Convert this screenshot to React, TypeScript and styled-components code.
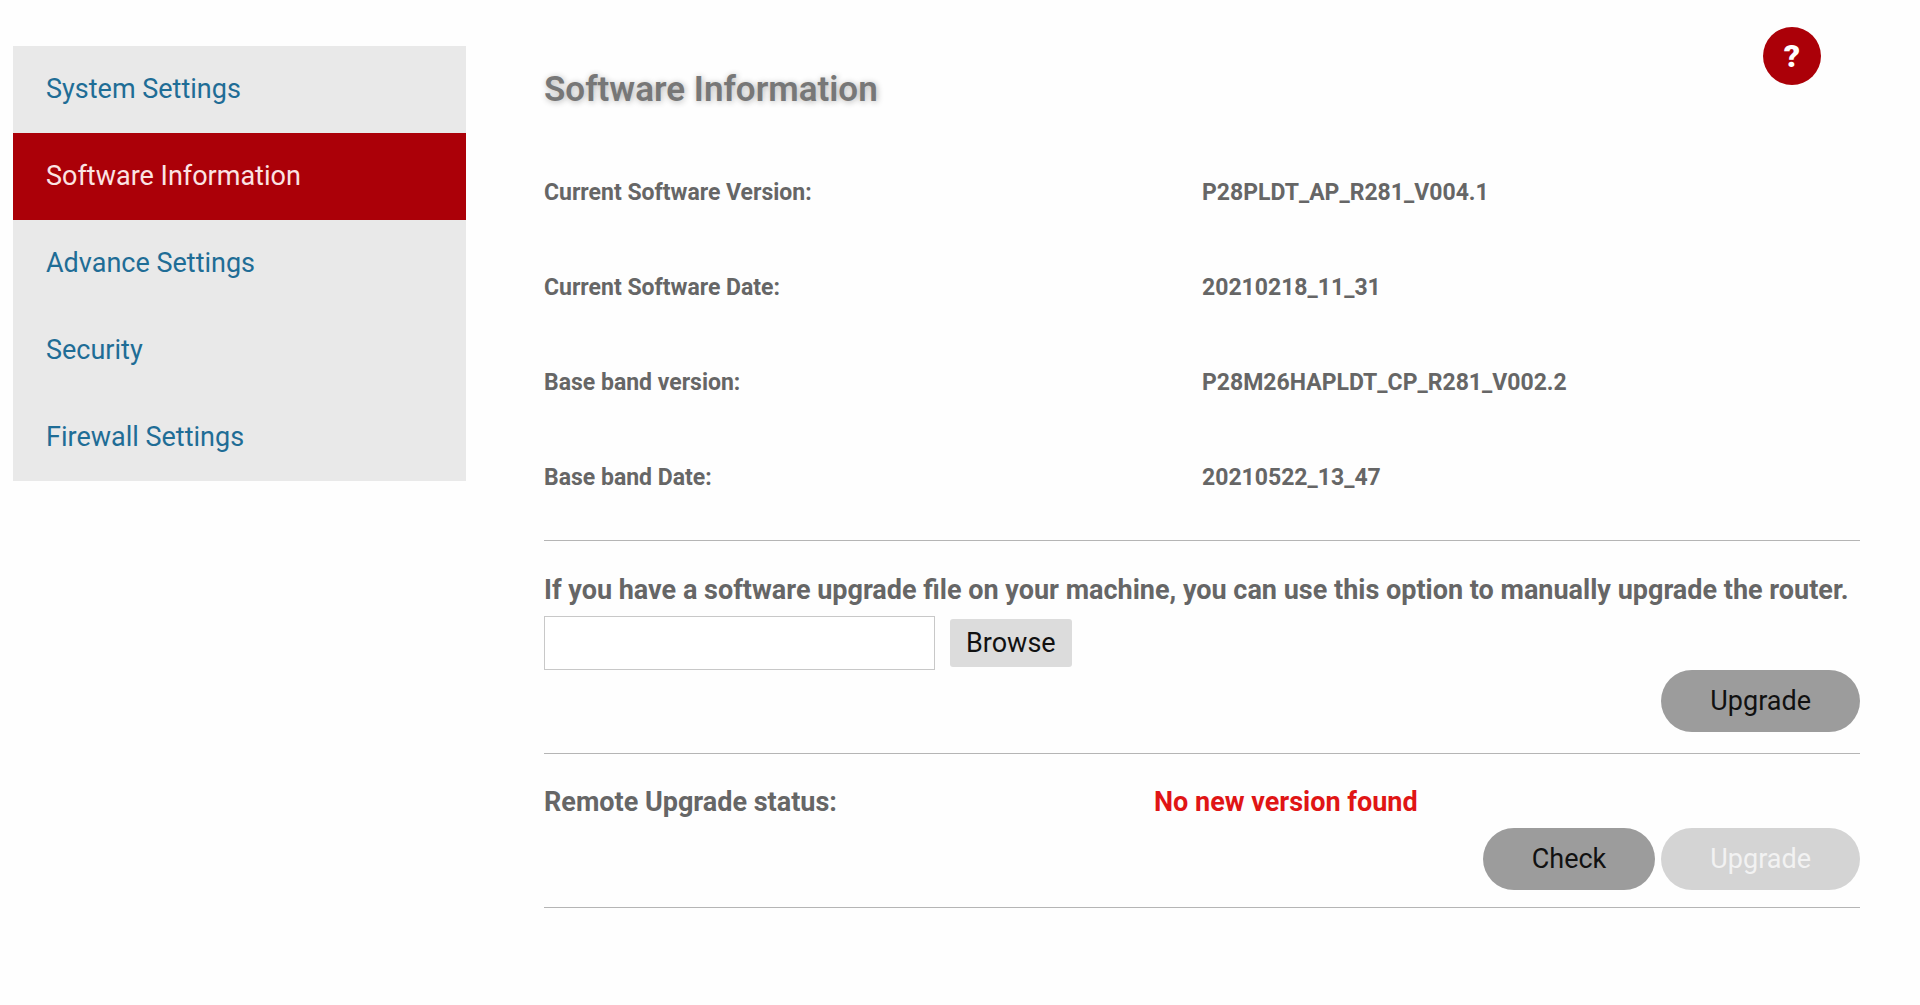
import { useRef, useState } from "react";
import styled, { createGlobalStyle } from "styled-components";

const menuItems = [
  "System Settings",
  "Software Information",
  "Advance Settings",
  "Security",
  "Firewall Settings",
];

const versionInfo = [
  { label: "Current Software Version:", value: "P28PLDT_AP_R281_V004.1" },
  { label: "Current Software Date:", value: "20210218_11_31" },
  { label: "Base band version:", value: "P28M26HAPLDT_CP_R281_V002.2" },
  { label: "Base band Date:", value: "20210522_13_47" },
];

function App() {
  const [current, setCurrent] = useState("Software Information");
  const [fileName, setFileName] = useState("");
  const fileRef = useRef<HTMLInputElement>(null);

  return (
    <>
      <GlobalStyle />
      <Wrapper>
        <Sidebar>
          {menuItems.map((item) => (
            <MenuLink
              key={item}
              href="#"
              $active={item === current}
              onClick={() => setCurrent(item)}
            >
              {item}
            </MenuLink>
          ))}
        </Sidebar>
        <Main>
          <Header>
            <Title>Software Information</Title>
            <HelpButton aria-label="Help">?</HelpButton>
          </Header>
          <InfoList>
            {versionInfo.map((e) => (
              <InfoRow key={e.label}>
                <dt>{e.label}</dt>
                <dd>{e.value}</dd>
              </InfoRow>
            ))}
          </InfoList>
          <Section>
            <FileLabel htmlFor="upgradeFile">
              If you have a software upgrade file on your machine, you can use
              this option to manually upgrade the router.
            </FileLabel>
            <FileRow>
              <FileInput id="upgradeFile" type="text" value={fileName} readOnly />
              <BrowseButton onClick={() => fileRef.current?.click()}>
                Browse
              </BrowseButton>
              <input
                ref={fileRef}
                type="file"
                hidden
                onChange={(e) => setFileName(e.target.files?.[0]?.name ?? "")}
              />
            </FileRow>
            <Actions>
              <PillButton>Upgrade</PillButton>
            </Actions>
          </Section>
          <Section $last>
            <StatusRow>
              <span>Remote Upgrade status:</span>
              <StatusText>No new version found</StatusText>
            </StatusRow>
            <Actions>
              <PillButton>Check</PillButton>
              <PillButton disabled>Upgrade</PillButton>
            </Actions>
          </Section>
        </Main>
      </Wrapper>
    </>
  );
}

export default App;

const GlobalStyle = createGlobalStyle`
  * {
    box-sizing: border-box;
  }

  body {
    margin: 0;
    background: #fefefe;
    color: #666;
    font-family: Roboto, "Liberation Sans", sans-serif;
    font-size: 27px;
    line-height: 32px;
  }

  button, input {
    font: inherit;
  }
`;

const Wrapper = styled.div`
  display: grid;
  grid-template-columns: minmax(0, 453fr) minmax(0, 1316fr);
  column-gap: 78px;
  align-items: start;
  padding: 27px 60px 0 13px;
`;

const Sidebar = styled.nav`
  display: flex;
  flex-direction: column;
  margin-top: 19px;
  background: #e9e9e9;
`;

const MenuLink = styled.a<{ $active: boolean }>`
  padding: 27px 33px;
  line-height: 33px;
  text-decoration: none;
  color: ${(props) => (props.$active ? "#fbe3e3" : "#1f6d96")};
  background: ${(props) => (props.$active ? "#ab0008" : "transparent")};
`;

const Main = styled.main`
  display: flex;
  flex-direction: column;
`;

const Header = styled.header`
  display: flex;
  justify-content: space-between;
  align-items: flex-start;
  padding-right: 39px;
`;

const Title = styled.h1`
  margin: 43px 0 35px;
  font-size: 35px;
  font-weight: 600;
  line-height: 40px;
  color: #777;
  text-shadow: 1px 1px 6px rgba(0, 0, 0, 0.3);
`;

const HelpButton = styled.button`
  width: 58px;
  height: 58px;
  padding: 0;
  border: none;
  border-radius: 50%;
  background: #ab0008;
  color: #fff;
  font-size: 32px;
  font-weight: 900;
  cursor: pointer;
`;

const InfoList = styled.dl`
  margin: 0 0 15px;
  font-size: 23px;
  font-weight: 700;
`;

const InfoRow = styled.div`
  display: grid;
  grid-template-columns: 1fr 1fr;
  align-items: center;
  height: 95px;

  dd {
    margin: 0;
  }
`;

const Section = styled.section<{ $last?: boolean }>`
  padding: ${(props) => (props.$last ? "32px 0 17px" : "33px 0 21px")};
  border-top: 1px solid #b5b5b5;
  border-bottom: ${(props) => (props.$last ? "1px solid #b5b5b5" : "none")};
`;

const FileLabel = styled.label`
  display: block;
  font-weight: 700;
`;

const FileRow = styled.div`
  display: flex;
  align-items: center;
  gap: 15px;
  margin-top: 10px;
`;

const FileInput = styled.input`
  width: 391px;
  height: 54px;
  padding: 0 12px;
  border: 1px solid #c8c8c8;
  background: #fff;
  color: #666;
`;

const BrowseButton = styled.button`
  padding: 8px 16px;
  border: none;
  border-radius: 3px;
  background: #dcdcdc;
  color: #111;
  cursor: pointer;
`;

const Actions = styled.div`
  display: flex;
  justify-content: flex-end;
  gap: 6px;
`;

const PillButton = styled.button`
  padding: 15px 49px;
  border: none;
  border-radius: 31px;
  background: #9c9c9c;
  color: #111;
  cursor: pointer;

  &:disabled {
    background: #d4d4d4;
    color: #f2f2f2;
    cursor: default;
  }
`;

const StatusRow = styled.div`
  display: grid;
  grid-template-columns: 610fr 706fr;
  margin-bottom: 10px;
  font-weight: 700;
`;

const StatusText = styled.span`
  color: #e01515;
`;
